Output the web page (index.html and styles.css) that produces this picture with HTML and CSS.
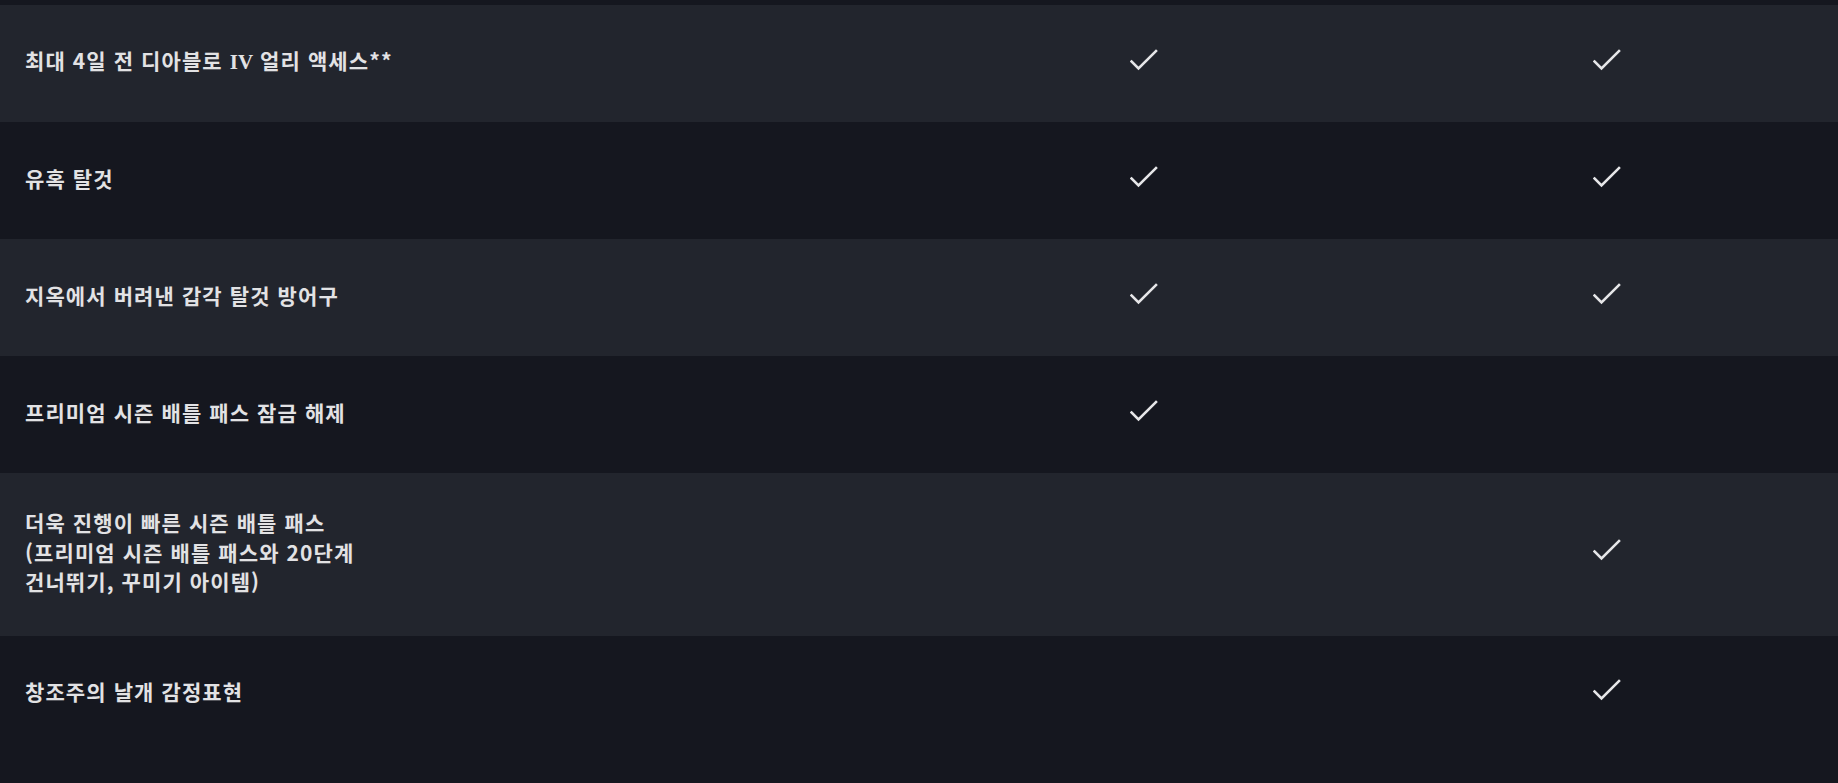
FILE: index.html
```html
<!DOCTYPE html>
<html lang="ko">
<head>
<meta charset="utf-8">
<link rel="stylesheet" href="styles.css">
</head>
<body>
<div class="table">
  <div class="row light">
    <div class="label"><span class="text">최대 4일 전 디아블로 <span class="latin">IV</span> 얼리 액세스**</span></div>
    <div class="cell"></div>
    <div class="cell"><svg class="check" viewBox="0 0 28 22"><polyline points="1.5,12.5 8.5,19.5 26,2"/></svg></div>
    <div class="cell"><svg class="check" viewBox="0 0 28 22"><polyline points="1.5,12.5 8.5,19.5 26,2"/></svg></div>
  </div>
  <div class="row dark">
    <div class="label"><span class="text">유혹 탈것</span></div>
    <div class="cell"></div>
    <div class="cell"><svg class="check" viewBox="0 0 28 22"><polyline points="1.5,12.5 8.5,19.5 26,2"/></svg></div>
    <div class="cell"><svg class="check" viewBox="0 0 28 22"><polyline points="1.5,12.5 8.5,19.5 26,2"/></svg></div>
  </div>
  <div class="row light">
    <div class="label"><span class="text">지옥에서 버려낸 갑각 탈것 방어구</span></div>
    <div class="cell"></div>
    <div class="cell"><svg class="check" viewBox="0 0 28 22"><polyline points="1.5,12.5 8.5,19.5 26,2"/></svg></div>
    <div class="cell"><svg class="check" viewBox="0 0 28 22"><polyline points="1.5,12.5 8.5,19.5 26,2"/></svg></div>
  </div>
  <div class="row dark">
    <div class="label"><span class="text">프리미엄 시즌 배틀 패스 잠금 해제</span></div>
    <div class="cell"></div>
    <div class="cell"><svg class="check" viewBox="0 0 28 22"><polyline points="1.5,12.5 8.5,19.5 26,2"/></svg></div>
    <div class="cell"></div>
  </div>
  <div class="row light">
    <div class="label"><span class="text">더욱 진행이 빠른 시즌 배틀 패스<br>(프리미엄 시즌 배틀 패스와 20단계<br>건너뛰기, 꾸미기 아이템)</span></div>
    <div class="cell"></div>
    <div class="cell"></div>
    <div class="cell"><svg class="check" viewBox="0 0 28 22"><polyline points="1.5,12.5 8.5,19.5 26,2"/></svg></div>
  </div>
  <div class="row dark">
    <div class="label"><span class="text">창조주의 날개 감정표현</span></div>
    <div class="cell"></div>
    <div class="cell"></div>
    <div class="cell"><svg class="check" viewBox="0 0 28 22"><polyline points="1.5,12.5 8.5,19.5 26,2"/></svg></div>
  </div>
</div>
</body>
</html>
```

FILE: styles.css
```css
html, body {
  margin: 0;
  padding: 0;
  background: #15171f;
}

body {
  font-family: "Noto Sans CJK KR", "Noto Sans", sans-serif;
  color: #e2e2e4;
}

.table {
  padding-top: 5px;
}

.row {
  display: grid;
  grid-template-columns: 450px 1fr 1fr 1fr;
  min-height: 117px;
}

.row.light {
  background: #22252d;
}

.row.dark {
  background: #15171f;
}

.label {
  display: flex;
  align-items: center;
  padding: 35px 0 39px 25px;
  font-size: 21px;
  font-weight: 700;
  line-height: 29.5px;
  letter-spacing: 1.1px;
}

.text {
  display: block;
  white-space: nowrap;
}

.latin {
  font-family: "Liberation Serif", serif;
  font-weight: 700;
  letter-spacing: 0;
}

.cell {
  display: flex;
  align-items: center;
  justify-content: center;
  padding-bottom: 8px;
}

.check {
  width: 28px;
  height: 22px;
  fill: none;
  stroke: #e6e6e8;
  stroke-width: 2.6;
  stroke-linecap: square;
}
```
